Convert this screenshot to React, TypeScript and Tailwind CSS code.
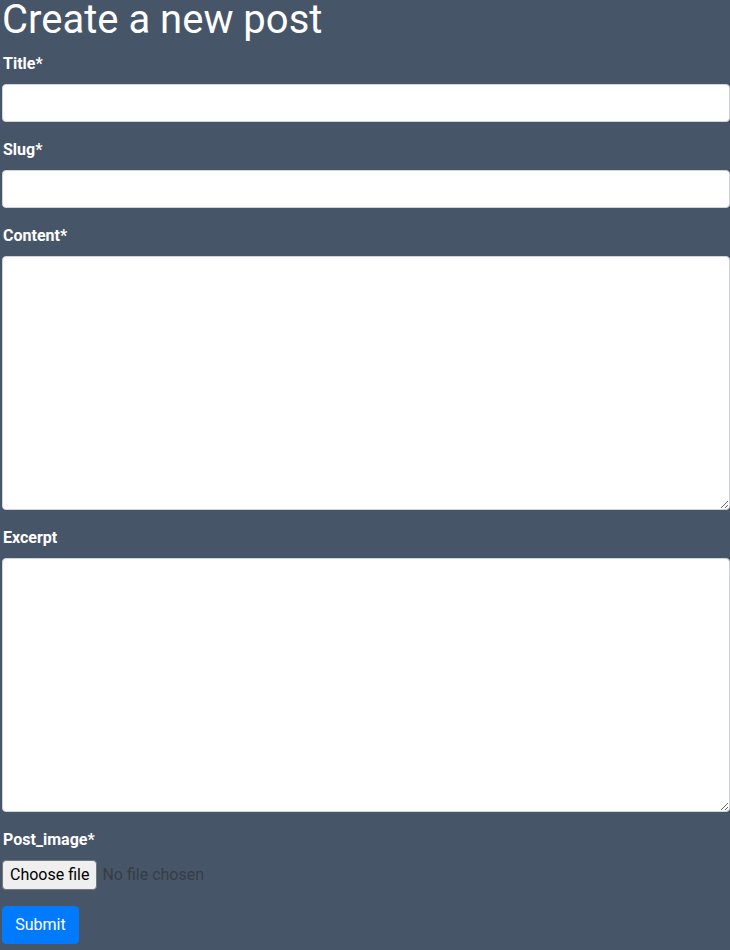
import React, { useState } from 'react';

const CreatePost: React.FC = () => {
    const [formData, setFormData] = useState({
        title: '',
        slug: '',
        content: '',
        excerpt: '',
    });
    const [fileName, setFileName] = useState('');

    const handleChange = (e: React.ChangeEvent<HTMLInputElement | HTMLTextAreaElement>) => {
        const { name, value } = e.target;
        setFormData(prev => ({ ...prev, [name]: value }));
    };

    const fieldClass = 'w-full border border-[#ced4da] rounded bg-white px-3 py-1.5 text-base text-[#495057] outline-none';

    return (
        <div className="min-h-[950px] bg-[#475569] pl-[2px] text-white font-['Roboto',sans-serif] overflow-hidden">
            <h1 className="text-[40px] leading-[40px] font-normal mb-3">Create a new post</h1>
            <form onSubmit={e => e.preventDefault()}>
                <div className="mb-4">
                    <label htmlFor="title" className="block mb-2 pl-px text-base leading-6 font-bold">Title*</label>
                    <input id="title" name="title" type="text" value={formData.title} onChange={handleChange} className={`${fieldClass} h-[38px]`} />
                </div>
                <div className="mb-4">
                    <label htmlFor="slug" className="block mb-2 pl-px text-base leading-6 font-bold">Slug*</label>
                    <input id="slug" name="slug" type="text" value={formData.slug} onChange={handleChange} className={`${fieldClass} h-[38px]`} />
                </div>
                <div className="mb-4">
                    <label htmlFor="content" className="block mb-2 pl-px text-base leading-6 font-bold">Content*</label>
                    <textarea id="content" name="content" value={formData.content} onChange={handleChange} className={`${fieldClass} h-[254px] block`} />
                </div>
                <div className="mb-4">
                    <label htmlFor="excerpt" className="block mb-2 pl-px text-base leading-6 font-bold">Excerpt</label>
                    <textarea id="excerpt" name="excerpt" onChange={handleChange} value={formData.excerpt} className={`${fieldClass} h-[254px] block`} />
                </div>
                <div className="mb-4">
                    <label htmlFor="post_image" className="block mb-2 pl-px text-base leading-6 font-bold">Post_image*</label>
                    <label className="flex items-center h-[30px] cursor-pointer">
                        <input
                            id="post_image"
                            name="post_image"
                            type="file"
                            className="hidden"
                            onChange={e => setFileName(e.target.files?.[0]?.name || '')}
                        />
                        <span className="flex items-center h-[30px] px-[7px] bg-[#efefef] text-black text-base border border-[#767676] rounded-sm">
                            Choose file
                        </span>
                        <span className="ml-[5px] text-base text-[#373d45]">{fileName || 'No file chosen'}</span>
                    </label>
                </div>
                <button type="submit" className="bg-[#007bff] text-white text-base leading-6 px-3 py-1.5 rounded border border-[#007bff] w-[77px]">
                    Submit
                </button>
            </form>
        </div>
    );
};

export default CreatePost;
